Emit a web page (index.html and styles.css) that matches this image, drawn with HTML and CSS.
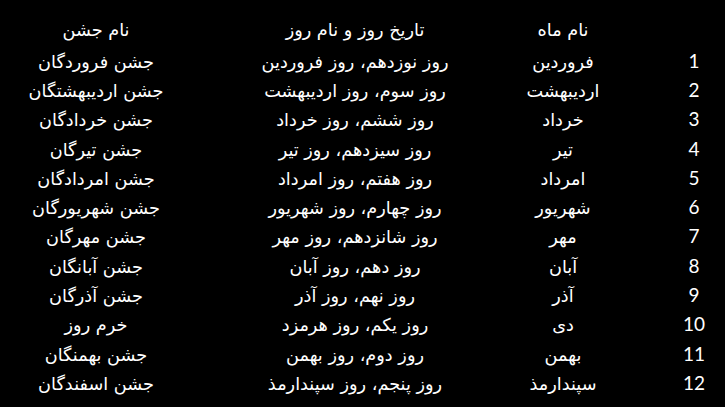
FILE: index.html
```html
<!DOCTYPE html>
<html lang="fa">
<head>
<meta charset="utf-8">
<link rel="stylesheet" href="styles.css">
</head>
<body>
<div class="calendar">
  <div class="row">
    <span class="num"></span>
    <span class="month">نام ماه</span>
    <span class="date">تاریخ روز و نام روز</span>
    <span class="fest">نام جشن</span>
  </div>
  <div class="row"><span class="num">1</span><span class="month">فروردین</span><span class="date">روز نوزدهم، روز فروردین</span><span class="fest">جشن فروردگان</span></div>
  <div class="row"><span class="num">2</span><span class="month">اردیبهشت</span><span class="date">روز سوم، روز اردیبهشت</span><span class="fest">جشن اردیبهشتگان</span></div>
  <div class="row"><span class="num">3</span><span class="month">خرداد</span><span class="date">روز ششم، روز خرداد</span><span class="fest">جشن خردادگان</span></div>
  <div class="row"><span class="num">4</span><span class="month">تیر</span><span class="date">روز سیزدهم، روز تیر</span><span class="fest">جشن تیرگان</span></div>
  <div class="row"><span class="num">5</span><span class="month">امرداد</span><span class="date">روز هفتم، روز امرداد</span><span class="fest">جشن امردادگان</span></div>
  <div class="row"><span class="num">6</span><span class="month">شهریور</span><span class="date">روز چهارم، روز شهریور</span><span class="fest">جشن شهریورگان</span></div>
  <div class="row"><span class="num">7</span><span class="month">مهر</span><span class="date">روز شانزدهم، روز مهر</span><span class="fest">جشن مهرگان</span></div>
  <div class="row"><span class="num">8</span><span class="month">آبان</span><span class="date">روز دهم، روز آبان</span><span class="fest">جشن آبانگان</span></div>
  <div class="row"><span class="num">9</span><span class="month">آذر</span><span class="date">روز نهم، روز آذر</span><span class="fest">جشن آذرگان</span></div>
  <div class="row"><span class="num">10</span><span class="month">دی</span><span class="date">روز یکم، روز هرمزد</span><span class="fest">خرم روز</span></div>
  <div class="row"><span class="num">11</span><span class="month">بهمن</span><span class="date">روز دوم، روز بهمن</span><span class="fest">جشن بهمنگان</span></div>
  <div class="row"><span class="num">12</span><span class="month">سپندارمذ</span><span class="date">روز پنجم، روز سپندارمذ</span><span class="fest">جشن اسفندگان</span></div>
</div>
</body>
</html>
```

FILE: styles.css
```css
html, body {
  margin: 0;
  padding: 0;
  background: #000;
  color: #fff;
  width: 725px;
  height: 407px;
  overflow: hidden;
}

.calendar {
  direction: rtl;
  width: 725px;
  padding-top: 16.4px;
  font-family: "DejaVu Sans", sans-serif;
  font-size: 17.7px;
}

.row {
  display: grid;
  grid-template-columns: 62px 200px 216px 247px;
  height: 29.3px;
  line-height: 29.3px;
  align-items: baseline;
}

.row > span {
  text-align: center;
  white-space: nowrap;
}

.num {
  direction: ltr;
  font-family: "Lato", sans-serif;
  font-size: 19px;
}

.fest {
  padding-right: 55px;
}
```
